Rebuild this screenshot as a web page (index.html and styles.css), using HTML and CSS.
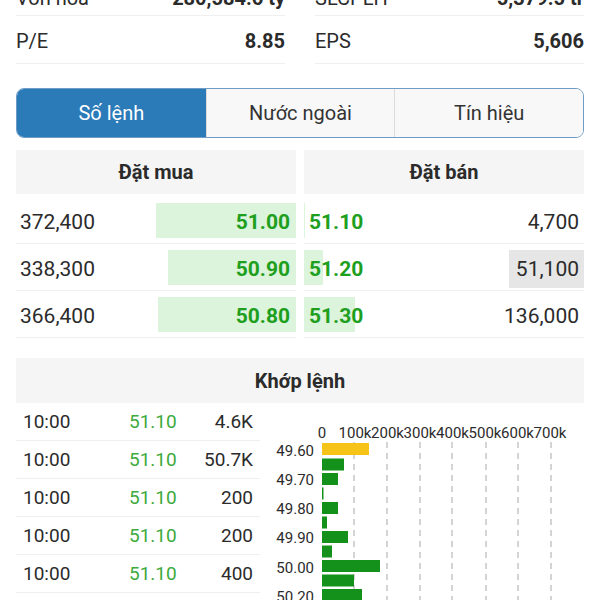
FILE: index.html
```html
<!DOCTYPE html>
<html lang="vi">
  <head>
    <meta charset="UTF-8" />
    <meta name="viewport" content="width=device-width, initial-scale=1.0" />
    <title>Chi tiết cổ phiếu</title>
    <link rel="stylesheet" href="styles.css">
  </head>
  <body>
    <div class="page">
      <div class="stats">
        <div class="stat"><span>Vốn hóa</span><b>280,584.6 tỷ</b></div>
        <div class="stat"><span>SLCPLH</span><b>5,379.5 tr</b></div>
        <div class="stat"><span>P/E</span><b>8.85</b></div>
        <div class="stat"><span>EPS</span><b>5,606</b></div>
      </div>

      <div class="tabs">
        <div class="tab active">Số lệnh</div>
        <div class="tab">Nước ngoài</div>
        <div class="tab">Tín hiệu</div>
      </div>

      <div class="book">
        <div class="side buy">
          <div class="side-head">Đặt mua</div>
          <div class="side-rows">
            <div class="row">
              <div class="depth" style="width: 140px"></div>
              <span class="qty">372,400</span><span class="price">51.00</span>
            </div>
            <div class="row">
              <div class="depth" style="width: 128px"></div>
              <span class="qty">338,300</span><span class="price">50.90</span>
            </div>
            <div class="row">
              <div class="depth" style="width: 138px"></div>
              <span class="qty">366,400</span><span class="price">50.80</span>
            </div>
          </div>
        </div>
        <div class="side sell">
          <div class="side-head">Đặt bán</div>
          <div class="side-rows">
            <div class="row">
              <div class="depth" style="width: 1px"></div>
              <span class="price">51.10</span><span class="qty">4,700</span>
            </div>
            <div class="row">
              <div class="depth" style="width: 19px"></div>
              <span class="price">51.20</span><span class="qty flash">51,100</span>
            </div>
            <div class="row">
              <div class="depth" style="width: 51px"></div>
              <span class="price">51.30</span><span class="qty">136,000</span>
            </div>
          </div>
        </div>
      </div>

      <div class="match">
        <div class="match-head">Khớp lệnh</div>
        <div class="match-body">
          <div class="ticks">
            <div class="tick"><span>10:00</span><span class="tick-price">51.10</span><span class="tick-vol">4.6K</span></div>
            <div class="tick"><span>10:00</span><span class="tick-price">51.10</span><span class="tick-vol">50.7K</span></div>
            <div class="tick"><span>10:00</span><span class="tick-price">51.10</span><span class="tick-vol">200</span></div>
            <div class="tick"><span>10:00</span><span class="tick-price">51.10</span><span class="tick-vol">200</span></div>
            <div class="tick"><span>10:00</span><span class="tick-price">51.10</span><span class="tick-vol">400</span></div>
          </div>

          <svg class="chart" width="324" height="200" viewBox="0 0 324 200">
            <g class="grid">
              <line x1="94" y1="39" x2="94" y2="200" />
              <line x1="127" y1="39" x2="127" y2="200" />
              <line x1="160" y1="39" x2="160" y2="200" />
              <line x1="192" y1="39" x2="192" y2="200" />
              <line x1="226" y1="39" x2="226" y2="200" />
              <line x1="258" y1="39" x2="258" y2="200" />
              <line x1="291" y1="39" x2="291" y2="200" />
            </g>
            <g class="x-axis">
              <text x="62" y="35">0</text>
              <text x="95" y="35">100k</text>
              <text x="127.5" y="35">200k</text>
              <text x="160" y="35">300k</text>
              <text x="192.5" y="35">400k</text>
              <text x="225" y="35">500k</text>
              <text x="257.5" y="35">600k</text>
              <text x="290" y="35">700k</text>
            </g>
            <g class="y-axis">
              <text x="54" y="52.5">49.60</text>
              <text x="54" y="82">49.70</text>
              <text x="54" y="111">49.80</text>
              <text x="54" y="140">49.90</text>
              <text x="54" y="169.5">50.00</text>
              <text x="54" y="198.5">50.20</text>
            </g>
            <g class="bars">
              <rect class="bar-ref" x="62" y="40" width="47" height="12" />
              <rect x="62" y="55.5" width="22" height="12" />
              <rect x="62" y="70" width="16" height="12" />
              <rect x="62" y="84.5" width="1.5" height="12" />
              <rect x="62" y="99" width="16" height="12" />
              <rect x="62" y="113.5" width="5" height="12" />
              <rect x="62" y="128" width="26" height="12" />
              <rect x="62" y="142.5" width="10" height="12" />
              <rect x="62" y="157" width="58" height="12" />
              <rect x="62" y="171.5" width="32" height="12" />
              <rect x="62" y="186" width="40" height="12" />
            </g>
          </svg>
        </div>
      </div>
    </div>
  </body>
</html>
```

FILE: styles.css
```css
body {
  margin: 0;
  background-color: #ffffff;
  font-family: Roboto, "Noto Sans", Arial, sans-serif;
  color: #2b2b2b;
  overflow: hidden;
}

.page {
  padding: 0 16px;
  margin-top: -20px;
}

/* chỉ số cơ bản */
.stats {
  display: grid;
  grid-template-columns: 1fr 1fr;
  column-gap: 30px;
}

.stat {
  display: flex;
  justify-content: space-between;
  align-items: center;
  height: 48px;
  padding-top: 3px;
  box-sizing: border-box;
  border-bottom: 1px solid #efefef;
  font-size: 20px;
}

.stat:nth-child(-n+2) {
  height: 36px;
  padding-top: 0;
}

.stat b {
  font-weight: 700;
}

/* tabs */
.tabs {
  display: grid;
  grid-template-columns: repeat(3, 1fr);
  margin-top: 24px;
  height: 48px;
  border: 1px solid #6f9cc6;
  border-radius: 8px;
  overflow: hidden;
}

.tab {
  display: flex;
  justify-content: center;
  align-items: center;
  background-color: #f8f8f8;
  font-size: 20px;
  color: #333;
}

.tab + .tab {
  border-left: 1px solid #dcdcdc;
}

.tab.active {
  background-color: #2b7bb9;
  color: #ffffff;
}

/* so lenh */
.book {
  display: grid;
  grid-template-columns: 1fr 1fr;
  column-gap: 8px;
  margin-top: 12px;
}

.side-head {
  height: 44px;
  display: flex;
  justify-content: center;
  align-items: center;
  background-color: #f5f5f5;
  font-size: 20px;
  font-weight: 700;
}

.side-rows {
  padding-top: 3px;
}

.row {
  position: relative;
  display: flex;
  justify-content: space-between;
  align-items: center;
  height: 47px;
  box-sizing: border-box;
  padding-top: 4px;
  border-bottom: 1px solid #efefef;
  font-size: 21px;
}

.buy .row {
  padding-left: 4px;
  padding-right: 6px;
}

.sell .row {
  padding-left: 5px;
}

.depth {
  position: absolute;
  top: 6px;
  bottom: 5px;
  background-color: #dcf3dc;
}

.buy .depth {
  right: 0;
}

.sell .depth {
  left: 0;
}

.row span {
  position: relative;
}

.price {
  color: #1e9f1e;
  font-weight: 700;
}

.sell .qty {
  padding: 0 5px 0 7px;
  line-height: 38px;
}

.qty.flash {
  background-color: #e6e6e6;
}

/* khop lenh */
.match {
  margin-top: 20px;
}

.match-head {
  height: 45px;
  display: flex;
  justify-content: center;
  align-items: center;
  background-color: #f5f5f5;
  font-size: 20px;
  font-weight: 700;
}

.match-body {
  display: flex;
}

.ticks {
  width: 244px;
  flex: none;
}

.tick {
  display: grid;
  grid-template-columns: 106px 60px 1fr;
  align-items: center;
  height: 37px;
  padding: 0 7px;
  border-bottom: 1px solid #efefef;
  font-size: 19px;
}

.tick-price {
  color: #3daa3d;
}

.tick-vol {
  text-align: right;
}

.chart {
  flex: none;
  display: block;
}

.chart text {
  font-family: Roboto, "Noto Sans", Arial, sans-serif;
  font-size: 15px;
  fill: #2b2b2b;
}

.x-axis text {
  text-anchor: middle;
}

.y-axis text {
  text-anchor: end;
}

.grid line {
  stroke: #a8a8a8;
  stroke-width: 1;
  stroke-dasharray: 6 5;
}

.bars rect {
  fill: #14911a;
}

.bars .bar-ref {
  fill: #f6c419;
}
```
